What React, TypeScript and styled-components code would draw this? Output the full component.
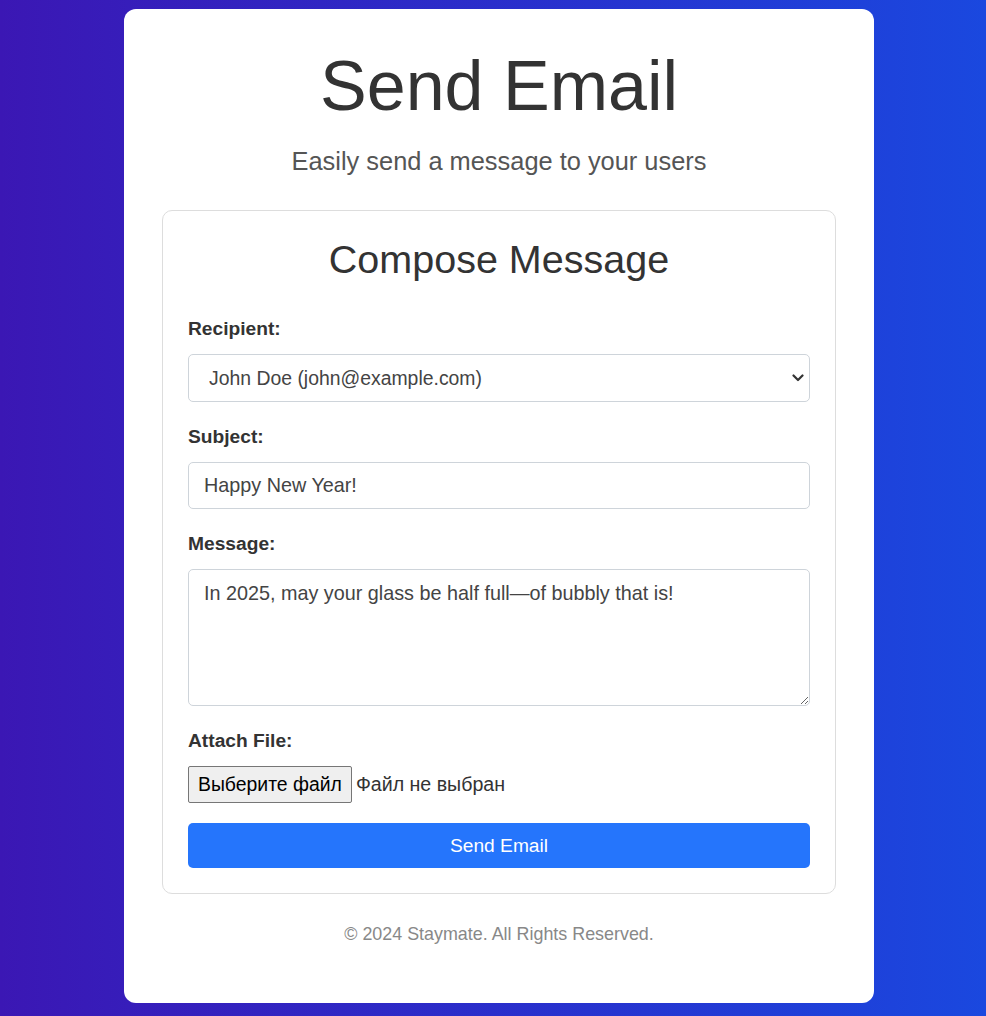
import React from "react";
import styled, { createGlobalStyle } from "styled-components";

const GlobalStyle = createGlobalStyle`
  html, body {
    margin: 0;
    padding: 0;
  }
  body {
    min-height: 100vh;
    background: linear-gradient(to right, #3b17b4 0%, #2a2ecb 50%, #1a48df 100%);
    font-family: "Liberation Sans", Arial, sans-serif;
    color: #333;
  }
  * {
    box-sizing: border-box;
  }
`;

const Page = styled.div`
  display: flex;
  justify-content: center;
  padding: 9px 0 13px 12px;
`;

const Card = styled.main`
  width: 750px;
  background: #fff;
  border-radius: 12px;
  padding: 37px 38px 58px;
  display: flex;
  flex-direction: column;
  text-align: center;
`;

const Title = styled.h1`
  margin: 0;
  font-size: 70px;
  font-weight: 400;
  line-height: normal;
  color: #333;
`;

const Subtitle = styled.p`
  margin: 21px 0 0;
  font-size: 25.4px;
  line-height: normal;
  color: #555;
`;

const Panel = styled.section`
  margin-top: 34px;
  border: 1px solid #ddd;
  border-radius: 10px;
  padding: 25px;
  text-align: left;
`;

const PanelTitle = styled.h2`
  margin: 1px 0 36px;
  font-size: 39.5px;
  font-weight: 400;
  line-height: normal;
  text-align: center;
  color: #333;
`;

const Group = styled.div<{ $gap?: number }>`
  display: flex;
  flex-direction: column;
  margin-bottom: ${(p) => p.$gap ?? 24}px;
`;

const Label = styled.label`
  display: block;
  font-size: 19.2px;
  font-weight: 700;
  line-height: 22px;
  margin-bottom: 14px;
  color: #333;
`;

const fieldBase = `
  width: 100%;
  font-family: "Liberation Sans", Arial, sans-serif;
  color: #444;
  background: #fff;
  border: 1px solid #ced4da;
  border-radius: 5px;
  outline: none;
`;

const SelectWrap = styled.div`
  position: relative;
  display: flex;
`;

const Select = styled.select`
  ${fieldBase}
  appearance: none;
  -webkit-appearance: none;
  font-size: 19.4px;
  height: 48px;
  padding: 0 36px 0 20px;
`;

const Chevron = styled.svg`
  position: absolute;
  right: 6px;
  top: 19px;
  width: 12px;
  height: 10px;
  pointer-events: none;
`;

const Input = styled.input`
  ${fieldBase}
  font-size: 19.8px;
  height: 47px;
  padding: 0 15px;
`;

const TextArea = styled.textarea`
  ${fieldBase}
  font-size: 19.8px;
  height: 137px;
  padding: 12px 15px;
  line-height: 22px;
`;

const FileRow = styled.label`
  display: flex;
  align-items: center;
  height: 37px;
  font-size: 19.6px;
  color: #333;
  cursor: pointer;
`;

const HiddenFile = styled.input`
  display: none;
`;

const FileButton = styled.span`
  display: inline-flex;
  align-items: center;
  height: 37px;
  padding: 0 9px;
  margin-right: 4px;
  background: #efefef;
  border: 1px solid #767676;
  border-radius: 2px;
  color: #000;
  font-size: 19.4px;
`;

const SendButton = styled.button`
  width: 100%;
  height: 45px;
  border: none;
  border-radius: 5px;
  background: #2575fc;
  color: #fff;
  font-family: "Liberation Sans", Arial, sans-serif;
  font-size: 19.2px;
  cursor: pointer;
`;

const Footer = styled.footer`
  margin-top: 30px;
  font-size: 17.9px;
  line-height: normal;
  color: #888;
`;

export default function App() {
  return (
    <>
      <GlobalStyle />
      <Page>
        <Card>
          <Title>Send Email</Title>
          <Subtitle>Easily send a message to your users</Subtitle>
          <Panel>
            <PanelTitle>Compose Message</PanelTitle>
            <form onSubmit={(e) => e.preventDefault()}>
              <Group>
                <Label htmlFor="recipient">Recipient:</Label>
                <SelectWrap>
                  <Select id="recipient" defaultValue="john">
                    <option value="john">John Doe (john@example.com)</option>
                    <option value="jane">Jane Smith (jane@example.com)</option>
                  </Select>
                  <Chevron viewBox="0 0 12 10" aria-hidden="true">
                    <path
                      d="M1.5 2.5 L6 7 L10.5 2.5"
                      fill="none"
                      stroke="#333"
                      strokeWidth="2.2"
                      strokeLinecap="round"
                      strokeLinejoin="round"
                    />
                  </Chevron>
                </SelectWrap>
              </Group>
              <Group>
                <Label htmlFor="subject">Subject:</Label>
                <Input id="subject" type="text" defaultValue="Happy New Year!" />
              </Group>
              <Group>
                <Label htmlFor="message">Message:</Label>
                <TextArea
                  id="message"
                  defaultValue="In 2025, may your glass be half full—of bubbly that is!"
                />
              </Group>
              <Group $gap={20}>
                <Label htmlFor="file">Attach File:</Label>
                <FileRow>
                  <HiddenFile id="file" type="file" />
                  <FileButton>Выберите файл</FileButton>
                  Файл не выбран
                </FileRow>
              </Group>
              <SendButton type="submit">Send Email</SendButton>
            </form>
          </Panel>
          <Footer>© 2024 Staymate. All Rights Reserved.</Footer>
        </Card>
      </Page>
    </>
  );
}
